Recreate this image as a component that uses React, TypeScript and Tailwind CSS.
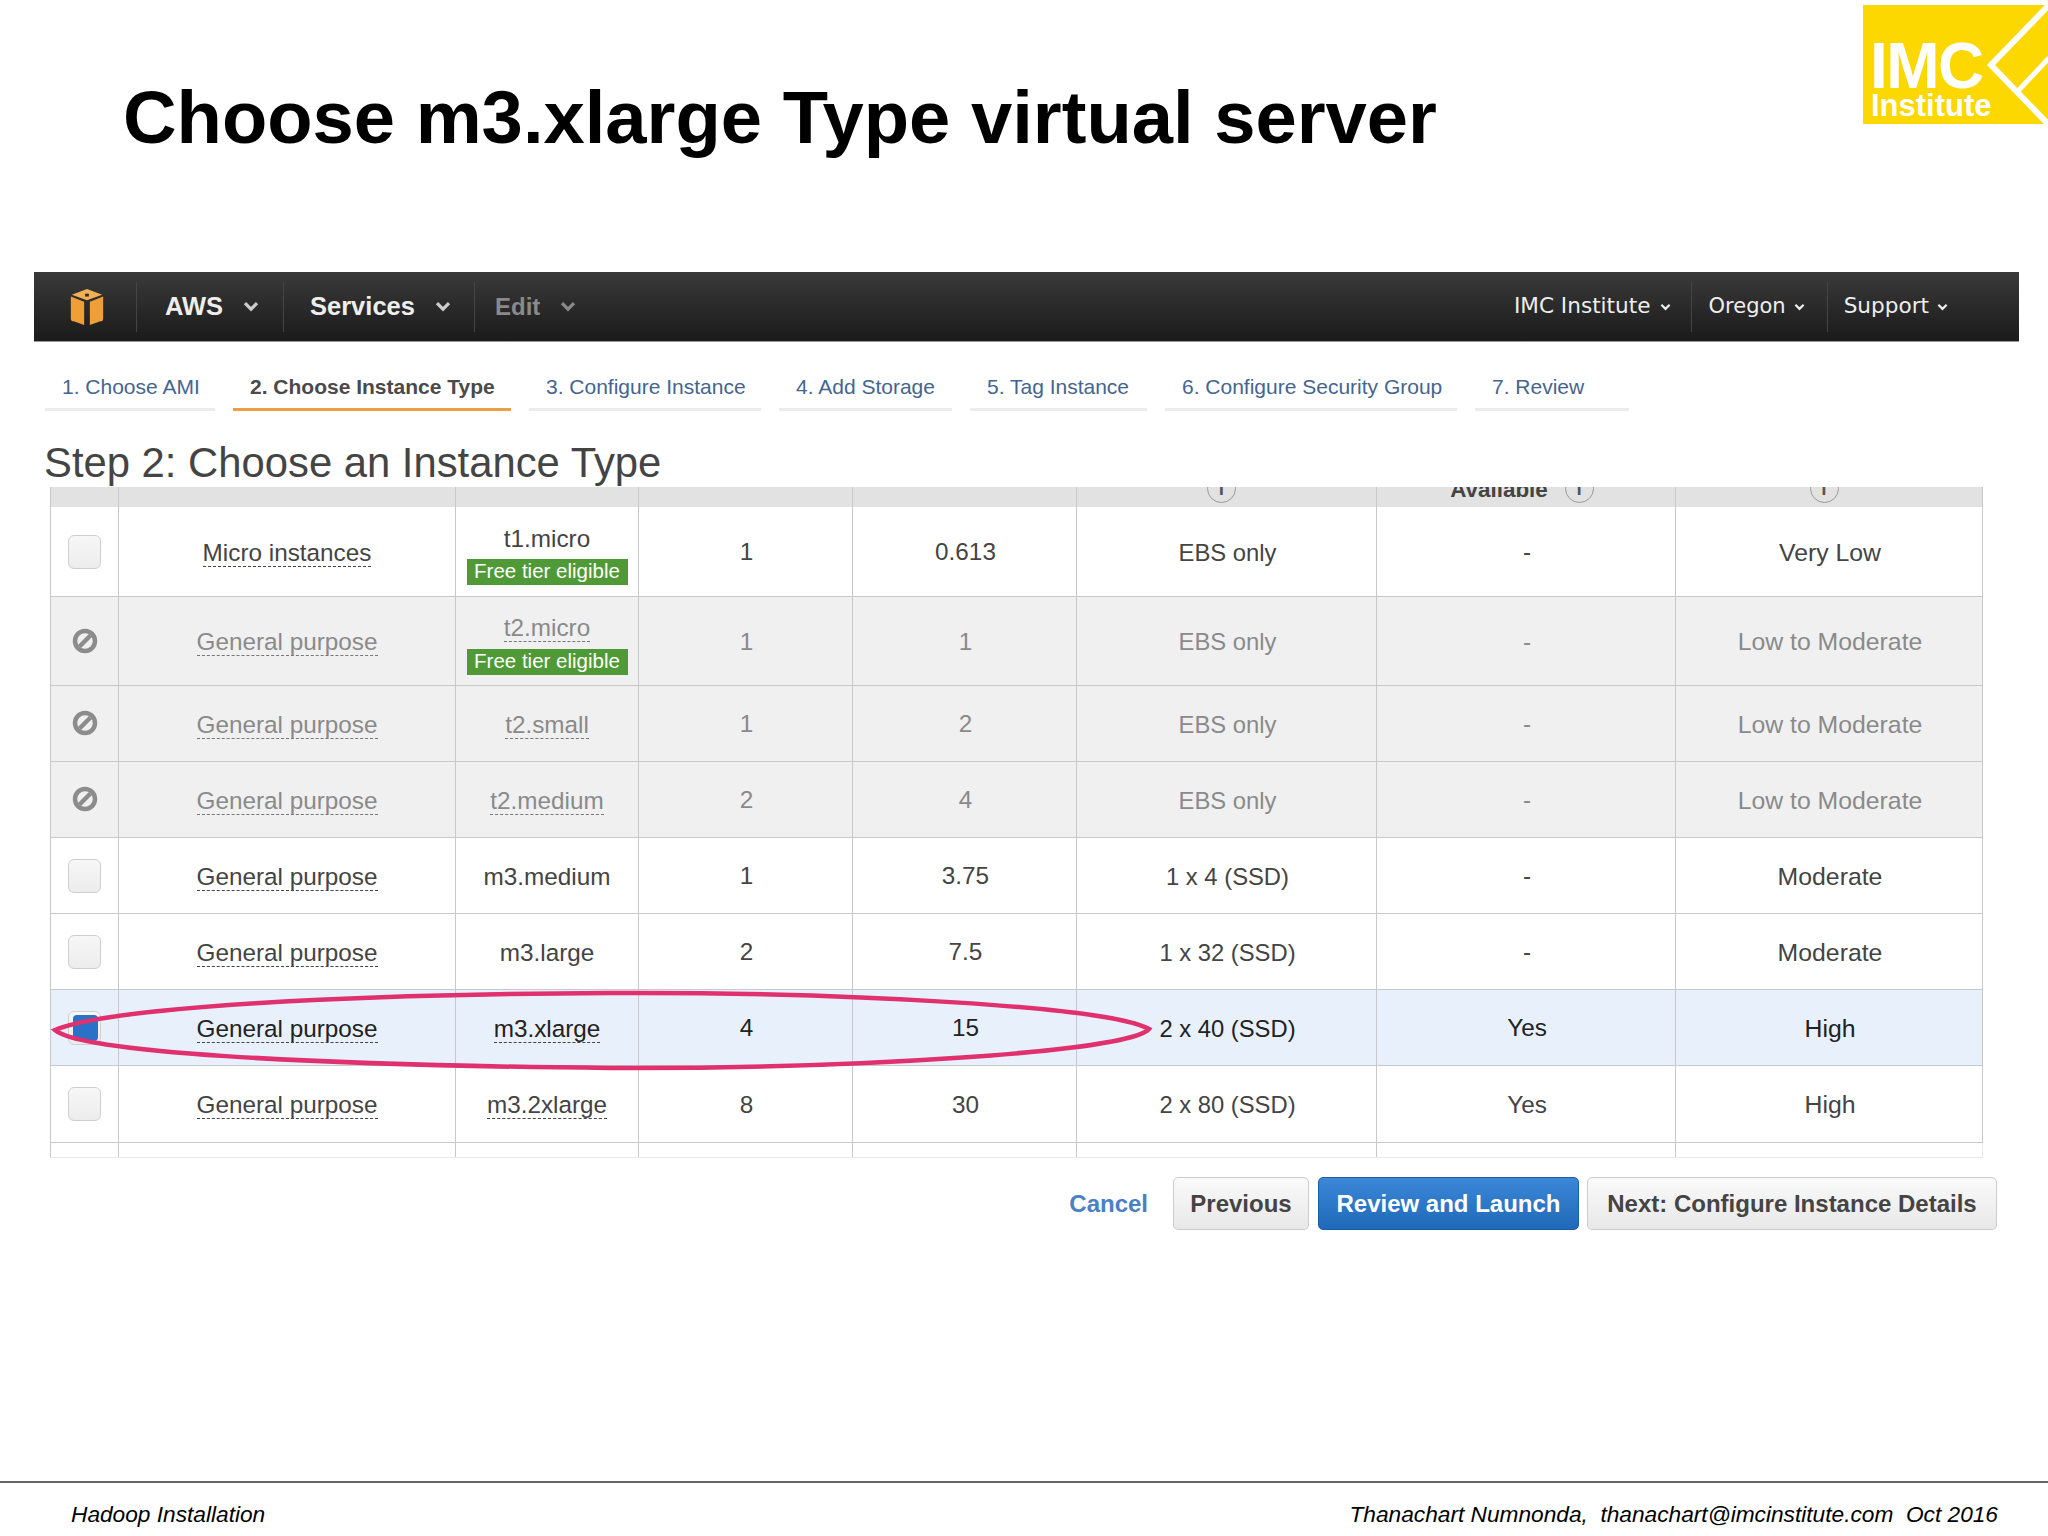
import React from "react";

const tabs = [
  { label: "1. Choose AMI", w: "w-[170px]" },
  { label: "2. Choose Instance Type", w: "w-[278px]", active: true },
  { label: "3. Configure Instance", w: "w-[232px]" },
  { label: "4. Add Storage", w: "w-[173px]" },
  { label: "5. Tag Instance", w: "w-[177px]" },
  { label: "6. Configure Security Group", w: "w-[292px]" },
  { label: "7. Review", w: "w-[154px]" },
];

interface Row {
  family: string;
  type: string;
  typeDashed?: boolean;
  badge?: boolean;
  vcpu: string;
  mem: string;
  storage: string;
  ebs: string;
  net: string;
  h: string;
  disabled?: boolean;
  selected?: boolean;
}

const rows: Row[] = [
  { family: "Micro instances", type: "t1.micro", badge: true, vcpu: "1", mem: "0.613", storage: "EBS only", ebs: "-", net: "Very Low", h: "h-[90px]" },
  { family: "General purpose", type: "t2.micro", typeDashed: true, badge: true, vcpu: "1", mem: "1", storage: "EBS only", ebs: "-", net: "Low to Moderate", h: "h-[89px]", disabled: true },
  { family: "General purpose", type: "t2.small", typeDashed: true, vcpu: "1", mem: "2", storage: "EBS only", ebs: "-", net: "Low to Moderate", h: "h-[76px]", disabled: true },
  { family: "General purpose", type: "t2.medium", typeDashed: true, vcpu: "2", mem: "4", storage: "EBS only", ebs: "-", net: "Low to Moderate", h: "h-[76px]", disabled: true },
  { family: "General purpose", type: "m3.medium", vcpu: "1", mem: "3.75", storage: "1 x 4 (SSD)", ebs: "-", net: "Moderate", h: "h-[76px]" },
  { family: "General purpose", type: "m3.large", vcpu: "2", mem: "7.5", storage: "1 x 32 (SSD)", ebs: "-", net: "Moderate", h: "h-[76px]" },
  { family: "General purpose", type: "m3.xlarge", typeDashed: true, vcpu: "4", mem: "15", storage: "2 x 40 (SSD)", ebs: "Yes", net: "High", h: "h-[76px]", selected: true },
  { family: "General purpose", type: "m3.2xlarge", typeDashed: true, vcpu: "8", mem: "30", storage: "2 x 80 (SSD)", ebs: "Yes", net: "High", h: "h-[77px]" },
];

const gridCols = "grid grid-cols-[68px_337px_183px_214px_224px_300px_299px_307px]";
const baseCell = "flex items-center justify-center border-l border-[#c8c8ca]";
const cell = `${baseCell} pt-[2px]`;
const numCell = `${cell} pl-[2px]`;

const Chevron = ({ className }: { className: string }) => (
  <svg viewBox="0 0 12 8" className={className} fill="none" stroke="currentColor" strokeWidth="2.4">
    <path d="M1.5 1.5 6 6l4.5-4.5" />
  </svg>
);

const NoEntry = () => (
  <svg viewBox="0 0 26 26" className="w-[26px] h-[26px] -mt-[1px]" fill="none" stroke="#8c8c8c" strokeWidth="4.5">
    <circle cx="13" cy="13" r="10" />
    <path d="M7.5 18.5 18.5 7.5" />
  </svg>
);

const Info = () => (
  <div className="flex shrink-0 items-center justify-center w-[29px] h-[29px] rounded-full border border-[#9a9a9a] text-[19px] font-bold text-[#555] leading-none">
    i
  </div>
);

const CubeLogo = () => (
  <svg viewBox="0 0 36 40" className="w-[36px] h-[38px]">
    <path d="M18 1 34 7 18 13 2 7z" fill="#f2b054" />
    <path d="M1 9l14 5.5V39L4 35a3 3 0 0 1-3-3z" fill="#ef9f35" />
    <path d="M35 9l-14 5.5V39l11-4a3 3 0 0 0 3-3z" fill="#ef9f35" />
    <path d="M16 6h4v3h-4z" fill="#2d2d2d" />
  </svg>
);

const ImcLogo = () => (
  <div className="relative w-[185px] h-[119px] bg-[#fcd700] overflow-hidden text-white font-bold">
    <div className="absolute left-[7px] top-[29px] text-[64px] leading-[1] tracking-[-1.5px]">IMC</div>
    <div className="absolute left-[8px] top-[85px] text-[31px] leading-[1]">Institute</div>
    <svg viewBox="0 0 185 119" className="absolute inset-0 w-full h-full" fill="none" stroke="#fff" strokeWidth="6">
      <path d="M186 0 128 60l58 60" />
      <path d="M154 87l32-34" strokeWidth="5" />
    </svg>
  </div>
);

function DataRow({ row }: { row: Row }) {
  const text = row.disabled ? "text-[#8a8a8a]" : row.selected ? "text-[#222]" : "text-[#444]";
  const bg = row.disabled ? "bg-[#f0f0f1]" : row.selected ? "bg-[#e8f1fb]" : "bg-white";
  const dash = row.disabled ? "border-[#777]" : "border-[#444]";
  return (
    <div className={`${gridCols} ${row.h} ${bg} ${text} border-b border-[#c8c8ca] text-[24.3px] border-r`}>
      <div className={baseCell}>
        {row.disabled ? (
          <NoEntry />
        ) : (
          <div className="relative w-[33px] h-[34px] rounded-md border border-[#cfcfcf] bg-gradient-to-b from-[#f7f7f7] to-[#ececec]">
            {row.selected && (
              <div className="absolute left-[4px] top-[3px] w-[25px] h-[26px] rounded-[4px] bg-[#2a72c8]" />
            )}
          </div>
        )}
      </div>
      <div className={cell}>
        <span className={`leading-[27px] border-b border-dashed ${dash}`}>{row.family}</span>
      </div>
      <div className={`${baseCell} flex-col ${row.badge ? "pt-[6px]" : "pt-[2px]"}`}>
        <span className={`leading-[27px] ${row.typeDashed ? `border-b border-dashed ${dash}` : ""}`}>{row.type}</span>
        {row.badge && (
          <div className="mt-[7px] w-[161px] h-[26px] flex items-center justify-center bg-[#4f9a36] text-white text-[20.5px]">
            Free tier eligible
          </div>
        )}
      </div>
      <div className={numCell}>{row.vcpu}</div>
      <div className={numCell}>{row.mem}</div>
      <div className={`${numCell} text-[23.8px]`}>{row.storage}</div>
      <div className={numCell}>{row.ebs}</div>
      <div className={`${numCell} text-[24.8px]`}>{row.net}</div>
    </div>
  );
}

export default function App() {
  return (
    <div className="w-[2048px] h-[1536px] bg-white flex flex-col overflow-hidden font-['Liberation_Sans',Arial,sans-serif]">
      {/* Slide title */}
      <div className="h-[272px] flex justify-between items-start pt-[5px]">
        <h1 className="ml-[123px] mt-[76px] text-[74.2px] leading-none font-bold text-black">
          Choose m3.xlarge Type virtual server
        </h1>
        <ImcLogo />
      </div>

      {/* AWS nav bar */}
      <div className="ml-[34px] w-[1985px] h-[70px] flex items-center bg-gradient-to-b from-[#3a3a3a] to-[#1b1b1b] border-b border-[#999] text-white">
        <div className="w-[103px] h-[50px] flex items-center justify-center border-r border-[#444] pl-[4px]">
          <CubeLogo />
        </div>
        <div className="w-[147px] h-[50px] flex items-center pl-[28px] gap-[20px] border-r border-[#444] text-[25.5px] font-bold text-[#eee]">
          AWS
          <Chevron className="w-[16px] h-[11px] text-[#ccc]" />
        </div>
        <div className="w-[191px] h-[50px] flex items-center pl-[26px] gap-[20px] border-r border-[#444] text-[25.5px] font-bold text-[#eee]">
          Services
          <Chevron className="w-[16px] h-[11px] text-[#ccc]" />
        </div>
        <div className="flex items-center pl-[20px] gap-[20px] text-[24px] font-bold text-[#8a8a8a]">
          Edit
          <Chevron className="w-[16px] h-[11px]" />
        </div>
        <div className="ml-auto flex items-center pr-[71px] text-[21.6px] text-[#eee] font-['DejaVu_Sans',sans-serif]">
          <div className="h-[50px] flex items-center gap-[9px] pr-[20px] border-r border-[#444]">
            IMC Institute
            <Chevron className="w-[11px] h-[8px]" />
          </div>
          <div className="h-[50px] flex items-center gap-[8px] pl-[17px] pr-[22px] border-r border-[#444] text-[21px]">
            Oregon
            <Chevron className="w-[11px] h-[8px]" />
          </div>
          <div className="h-[50px] flex items-center gap-[8px] pl-[16px]">
            Support
            <Chevron className="w-[11px] h-[8px]" />
          </div>
        </div>
      </div>

      {/* Wizard steps */}
      <div className="ml-[45px] h-[70px] flex gap-[18px] text-[21px] text-[#44658f]">
        {tabs.map((t) => (
          <div
            key={t.label}
            className={`${t.w} h-[69px] flex items-center pl-[17px] pt-[23px] border-b-[3px] ${
              t.active ? "border-[#eb9f45] text-[#4a4a4a] font-bold" : "border-[#ececec]"
            }`}
          >
            {t.label}
          </div>
        ))}
      </div>

      <h2 className="ml-[44px] mt-[26px] h-[49px] text-[41.8px] leading-[49px] text-[#444]">
        Step 2: Choose an Instance Type
      </h2>

      {/* Instance table, scrolled so that the header is cut off */}
      <div className="relative ml-[50px] w-[1933px] text-center">
        <div className={`${gridCols} grid-rows-[20px] h-[20px] bg-[#e2e2e3] border-r border-[#c8c8ca] overflow-hidden text-[#444]`}>
          <div className="border-l border-[#c8c8ca]" />
          <div className="border-l border-[#c8c8ca]" />
          <div className="border-l border-[#c8c8ca]" />
          <div className="border-l border-[#c8c8ca]" />
          <div className="border-l border-[#c8c8ca]" />
          <div className="border-l border-[#c8c8ca] flex justify-center items-end pb-[4px] pr-[10px]">
            <Info />
          </div>
          <div className="border-l border-[#c8c8ca] flex justify-center items-end gap-[17px] pb-[4px] pr-[8px] text-[22.4px] font-bold leading-[26px]">
            <span>Available</span>
            <Info />
          </div>
          <div className="border-l border-[#c8c8ca] flex justify-center items-end pb-[4px] pr-[10px]">
            <Info />
          </div>
        </div>
        {rows.map((r, i) => (
          <DataRow key={i} row={r} />
        ))}
        <div className={`${gridCols} h-[15px] border-b border-[#e8e8e8] border-r`}>
          {[0, 1, 2, 3, 4, 5, 6, 7].map((i) => (
            <div key={i} className="border-l border-[#c8c8ca]" />
          ))}
        </div>
        {/* Hand-drawn marker round the chosen row */}
        <svg viewBox="0 0 1933 671" className="absolute inset-0 w-full h-full pointer-events-none" fill="none" stroke="#e0306e" strokeWidth="4.5">
          <path d="M1099 542C1060 520 800 505 560 506 300 507 60 520 5 543 30 565 250 578 560 581 800 582 1080 565 1099 542Z" />
        </svg>
      </div>

      {/* Actions */}
      <div className="mt-[19px] flex justify-end items-center pr-[51px] text-[24px] font-bold">
        <div className="mr-[25px] text-[#4a80c4]">Cancel</div>
        <div className="mr-[9px] w-[136px] h-[53px] flex items-center justify-center rounded-[5px] border border-[#ccc] bg-gradient-to-b from-[#fafafa] to-[#e8e8e8] text-[#444]">
          Previous
        </div>
        <div className="mr-[8px] w-[261px] h-[53px] flex items-center justify-center rounded-[5px] border border-[#1c5ea8] bg-gradient-to-b from-[#3c87d8] to-[#1f69b8] text-white">
          Review and Launch
        </div>
        <div className="w-[410px] h-[53px] flex items-center justify-center rounded-[5px] border border-[#ccc] bg-gradient-to-b from-[#fafafa] to-[#e8e8e8] text-[#444]">
          Next: Configure Instance Details
        </div>
      </div>

      {/* Slide footer */}
      <div className="mt-auto h-[55px] border-t-2 border-[#666] flex justify-between items-center pt-[10px] pl-[71px] pr-[50px] text-[22.7px] italic text-black">
        <span>Hadoop Installation</span>
        <span>Thanachart Numnonda,&nbsp; thanachart@imcinstitute.com&nbsp; Oct 2016</span>
      </div>
    </div>
  );
}
